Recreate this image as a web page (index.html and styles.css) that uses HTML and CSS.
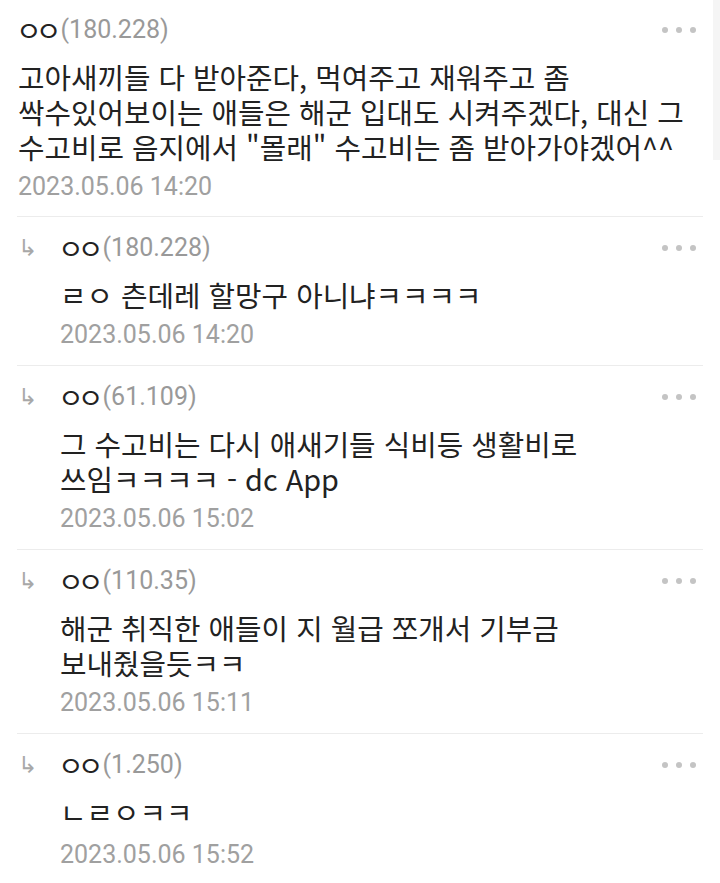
FILE: index.html
```html
<!DOCTYPE html>
<html lang="ko">
<head>
<meta charset="utf-8">
<link rel="stylesheet" href="styles.css">
</head>
<body>
<div class="scrollbar"></div>
<div class="list">
  <div class="comment">
    <div class="body">
      <div class="head"><span class="nick">ㅇㅇ</span><span class="ip">(180.228)</span><span class="dots"><i></i><i></i><i></i></span></div>
      <p class="text">고아새끼들 다 받아준다, 먹여주고 재워주고 좀 싹수있어보이는 애들은 해군 입대도 시켜주겠다, 대신 그 수고비로 음지에서 "몰래" 수고비는 좀 받아가야겠어^^</p>
      <div class="date">2023.05.06 14:20</div>
    </div>
  </div>
  <div class="comment reply">
    <span class="arrow">↳</span>
    <div class="body">
      <div class="head"><span class="nick">ㅇㅇ</span><span class="ip">(180.228)</span><span class="dots"><i></i><i></i><i></i></span></div>
      <p class="text">ㄹㅇ 츤데레 할망구 아니냐ㅋㅋㅋㅋ</p>
      <div class="date">2023.05.06 14:20</div>
    </div>
  </div>
  <div class="comment reply">
    <span class="arrow">↳</span>
    <div class="body">
      <div class="head"><span class="nick">ㅇㅇ</span><span class="ip">(61.109)</span><span class="dots"><i></i><i></i><i></i></span></div>
      <p class="text">그 수고비는 다시 애새기들 식비등 생활비로 쓰임ㅋㅋㅋㅋ - dc App</p>
      <div class="date">2023.05.06 15:02</div>
    </div>
  </div>
  <div class="comment reply">
    <span class="arrow">↳</span>
    <div class="body">
      <div class="head"><span class="nick">ㅇㅇ</span><span class="ip">(110.35)</span><span class="dots"><i></i><i></i><i></i></span></div>
      <p class="text">해군 취직한 애들이 지 월급 쪼개서 기부금 보내줬을듯ㅋㅋ</p>
      <div class="date">2023.05.06 15:11</div>
    </div>
  </div>
  <div class="comment reply last">
    <span class="arrow">↳</span>
    <div class="body">
      <div class="head"><span class="nick">ㅇㅇ</span><span class="ip">(1.250)</span><span class="dots"><i></i><i></i><i></i></span></div>
      <p class="text">ㄴㄹㅇㅋㅋ</p>
      <div class="date date-last">2023.05.06 15:52</div>
    </div>
  </div>
</div>
</body>
</html>
```
FILE: styles.css
```css
html, body {
  margin: 0;
  padding: 0;
  background: #fff;
}
body {
  font-family: Roboto, "Noto Sans CJK KR", sans-serif;
  color: #222;
  font-size: 25px;
  width: 720px;
  height: 883px;
  overflow: hidden;
  position: relative;
}
.scrollbar {
  position: absolute;
  right: 0;
  top: 0;
  width: 7px;
  height: 160px;
  background: #f5f5f5;
}
.list {
  padding: 0 17px;
}
.comment {
  display: flex;
  border-bottom: 1px solid #ececec;
  padding: 12px 0 11px 1px;
}
.comment.reply {
  padding: 13px 0 12px 1px;
}
.comment.last {
  border-bottom: none;
}
.arrow {
  width: 42px;
  flex: none;
  color: #a8a8a8;
  font-size: 23px;
  line-height: 36px;
  font-family: "DejaVu Sans", sans-serif;
}
.body {
  flex: 1;
  min-width: 0;
}
.head {
  display: flex;
  align-items: center;
  height: 36px;
  line-height: 36px;
}
.nick {
  font-family: "Noto Sans CJK KR", sans-serif;
  color: #222;
  font-size: 28px;
  letter-spacing: -6px;
  line-height: 1;
  margin-left: -2px;
  padding-right: 5px;
}
.ip {
  color: #999;
}
.dots {
  margin-left: auto;
  margin-right: 7px;
  display: flex;
  gap: 8px;
}
.dots i {
  width: 6px;
  height: 6px;
  border-radius: 50%;
  background: #c4c4c4;
}
.text {
  margin: 11px 10px 0 0;
  line-height: 35px;
  font-family: "Noto Sans CJK KR", sans-serif;
  font-size: 28.8px;
  word-break: keep-all;
}
.date {
  margin-top: 5px;
  line-height: 36px;
  color: #a0a0a0;
}
.date-last {
  margin-top: 8px;
}
```
